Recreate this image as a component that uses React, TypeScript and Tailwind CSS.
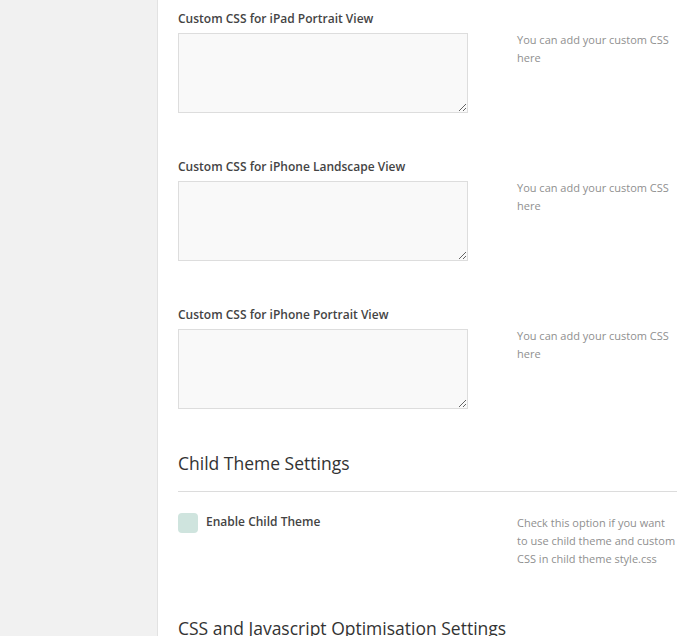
export default function App() {
  const fields = [
    'Custom CSS for iPad Portrait View',
    'Custom CSS for iPhone Landscape View',
    'Custom CSS for iPhone Portrait View',
  ]

  return (
    <div className="flex h-[636px] overflow-hidden bg-white font-['Open_Sans',sans-serif]">
      {/* Admin sidebar */}
      <div className="w-[158px] shrink-0 bg-[#f1f1f1] border-r border-[#e2e2e2]" />

      {/* Options panel */}
      <div className="flex-1 min-w-0 pl-[20px] pr-[16px] pt-[10px]">
        {fields.map(f => (
          <div key={f} className="flex mb-[45px]">
            <div className="w-[339px] shrink-0">
              <div className="text-[12px] leading-[18px] font-semibold text-[#444]">{f}</div>
              <textarea className="mt-[5px] block w-[290px] h-[80px] bg-[#f9f9f9] border border-[#dddddd] outline-none" />
            </div>
            <div className="pt-[21px] w-[160px] text-[11px] leading-[18px] text-[#8f8f8f]">
              You can add your custom CSS here
            </div>
          </div>
        ))}

        <h2 className="-mt-[3px] text-[17.5px] leading-[24px] text-[#333]">Child Theme Settings</h2>
        <div className="mt-[16px] border-t border-[#dcdcdc]" />

        <div className="flex mt-[21px] h-[83px]">
          <div className="w-[339px] shrink-0 flex items-start gap-[8px]">
            <span className="block w-[20px] h-[20px] rounded-[4px] bg-[#cfe4de]" />
            <span className="text-[12px] leading-[18px] font-semibold text-[#444]">Enable Child Theme</span>
          </div>
          <div className="pt-[1px] w-[160px] text-[11px] leading-[18px] text-[#8f8f8f]">
            Check this option if you want to use child theme and custom CSS in child theme style.css
          </div>
        </div>

        <h2 className="mt-[20px] text-[17.5px] leading-[24px] text-[#333] whitespace-nowrap">CSS and Javascript Optimisation Settings</h2>
      </div>
    </div>
  )
}
